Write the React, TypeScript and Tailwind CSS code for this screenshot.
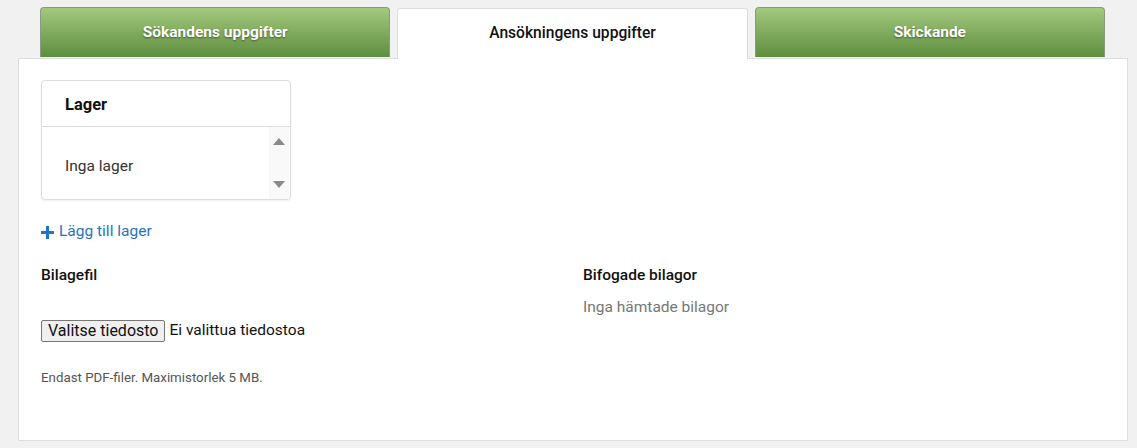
import React from 'react';

const tabs = [
  { label: 'Sökandens uppgifter', active: false },
  { label: 'Ansökningens uppgifter', active: true },
  { label: 'Skickande', active: false },
];

export default function App() {
  return (
    <div className="w-[1137px] h-[448px] bg-[#f1f1f1] pt-[7px] font-['Roboto',sans-serif] text-[#222]">
      {/* Tabs */}
      <div className="flex gap-[7px] pl-[40px] pr-[32px] relative z-10">
        {tabs.map((t) =>
          t.active ? (
            <div
              key={t.label}
              className="flex-1 h-[51px] mt-[1px] -mb-[1px] bg-white border border-b-0 border-[#dcdcdc] rounded-t-[3px] flex items-center justify-center text-[15.6px] font-medium text-[#111]"
            >
              {t.label}
            </div>
          ) : (
            <div
              key={t.label}
              className="flex-1 h-[50px] rounded-t-[4px] border border-b-0 border-[#8a9a80] bg-gradient-to-b from-[#a3c97e] to-[#5f8e3f] flex items-center justify-center text-[15.5px] font-bold text-white [text-shadow:0_1px_2px_rgba(0,0,0,0.45)]"
            >
              {t.label}
            </div>
          )
        )}
      </div>

      {/* Panel */}
      <div className="ml-[18px] w-[1110px] h-[383px] bg-white border border-[#dedede] pl-[22px] pr-[22px] pt-[21px]">
        {/* Lager box */}
        <div className="w-[250px] h-[120px] border border-[#dcdcdc] rounded-[4px] shadow-[0_1px_2px_rgba(0,0,0,0.08)] flex flex-col">
          <div className="h-[46px] border-b border-[#dcdcdc] flex items-center pl-[23px] pt-[3px] text-[16.5px] font-bold text-[#111]">
            Lager
          </div>
          <div className="flex-1 flex">
            <div className="flex-1 flex items-center pl-[23px] pt-[7px] text-[15.5px] text-[#333]">Inga lager</div>
            <div className="w-[20px] mr-[1px] bg-[#f9f9f9] flex flex-col items-center justify-between py-[11px]">
              <div className="w-0 h-0 border-l-[6px] border-r-[6px] border-b-[7px] border-l-transparent border-r-transparent border-b-[#8a8a8a]" />
              <div className="w-0 h-0 border-l-[6px] border-r-[6px] border-t-[7px] border-l-transparent border-r-transparent border-t-[#8a8a8a]" />
            </div>
          </div>
        </div>

        {/* Add link */}
        <div className="mt-[20px] flex items-center gap-[5px] text-[15.5px] text-[#1f74c4]">
          <svg width="13" height="13" viewBox="0 0 13 13" className="mt-[1px]">
            <rect x="5" y="0" width="3" height="13" fill="#1f74c4" />
            <rect x="0" y="5" width="13" height="3" fill="#1f74c4" />
          </svg>
          <span>Lägg till lager</span>
        </div>

        {/* Attachments */}
        <div className="mt-[22px] grid grid-cols-[542px_1fr]">
          <div>
            <div className="text-[15.5px] font-medium text-[#111] leading-[20px]">Bilagefil</div>
            <div className="mt-[34px] flex items-center text-[15.5px] text-[#111]">
              <button className="h-[22px] px-[6px] bg-[#efefef] border border-[#767676] rounded-[2px] text-[16px] leading-none text-[#111]">
                Valitse tiedosto
              </button>
              <span className="ml-[4px]">Ei valittua tiedostoa</span>
            </div>
            <div className="mt-[25px] text-[13.3px] text-[#555]">Endast PDF-filer. Maximistorlek 5 MB.</div>
          </div>
          <div>
            <div className="text-[15.5px] font-medium text-[#111] leading-[20px]">Bifogade bilagor</div>
            <div className="mt-[11px] text-[15.5px] text-[#777]">Inga hämtade bilagor</div>
          </div>
        </div>
      </div>
    </div>
  );
}
